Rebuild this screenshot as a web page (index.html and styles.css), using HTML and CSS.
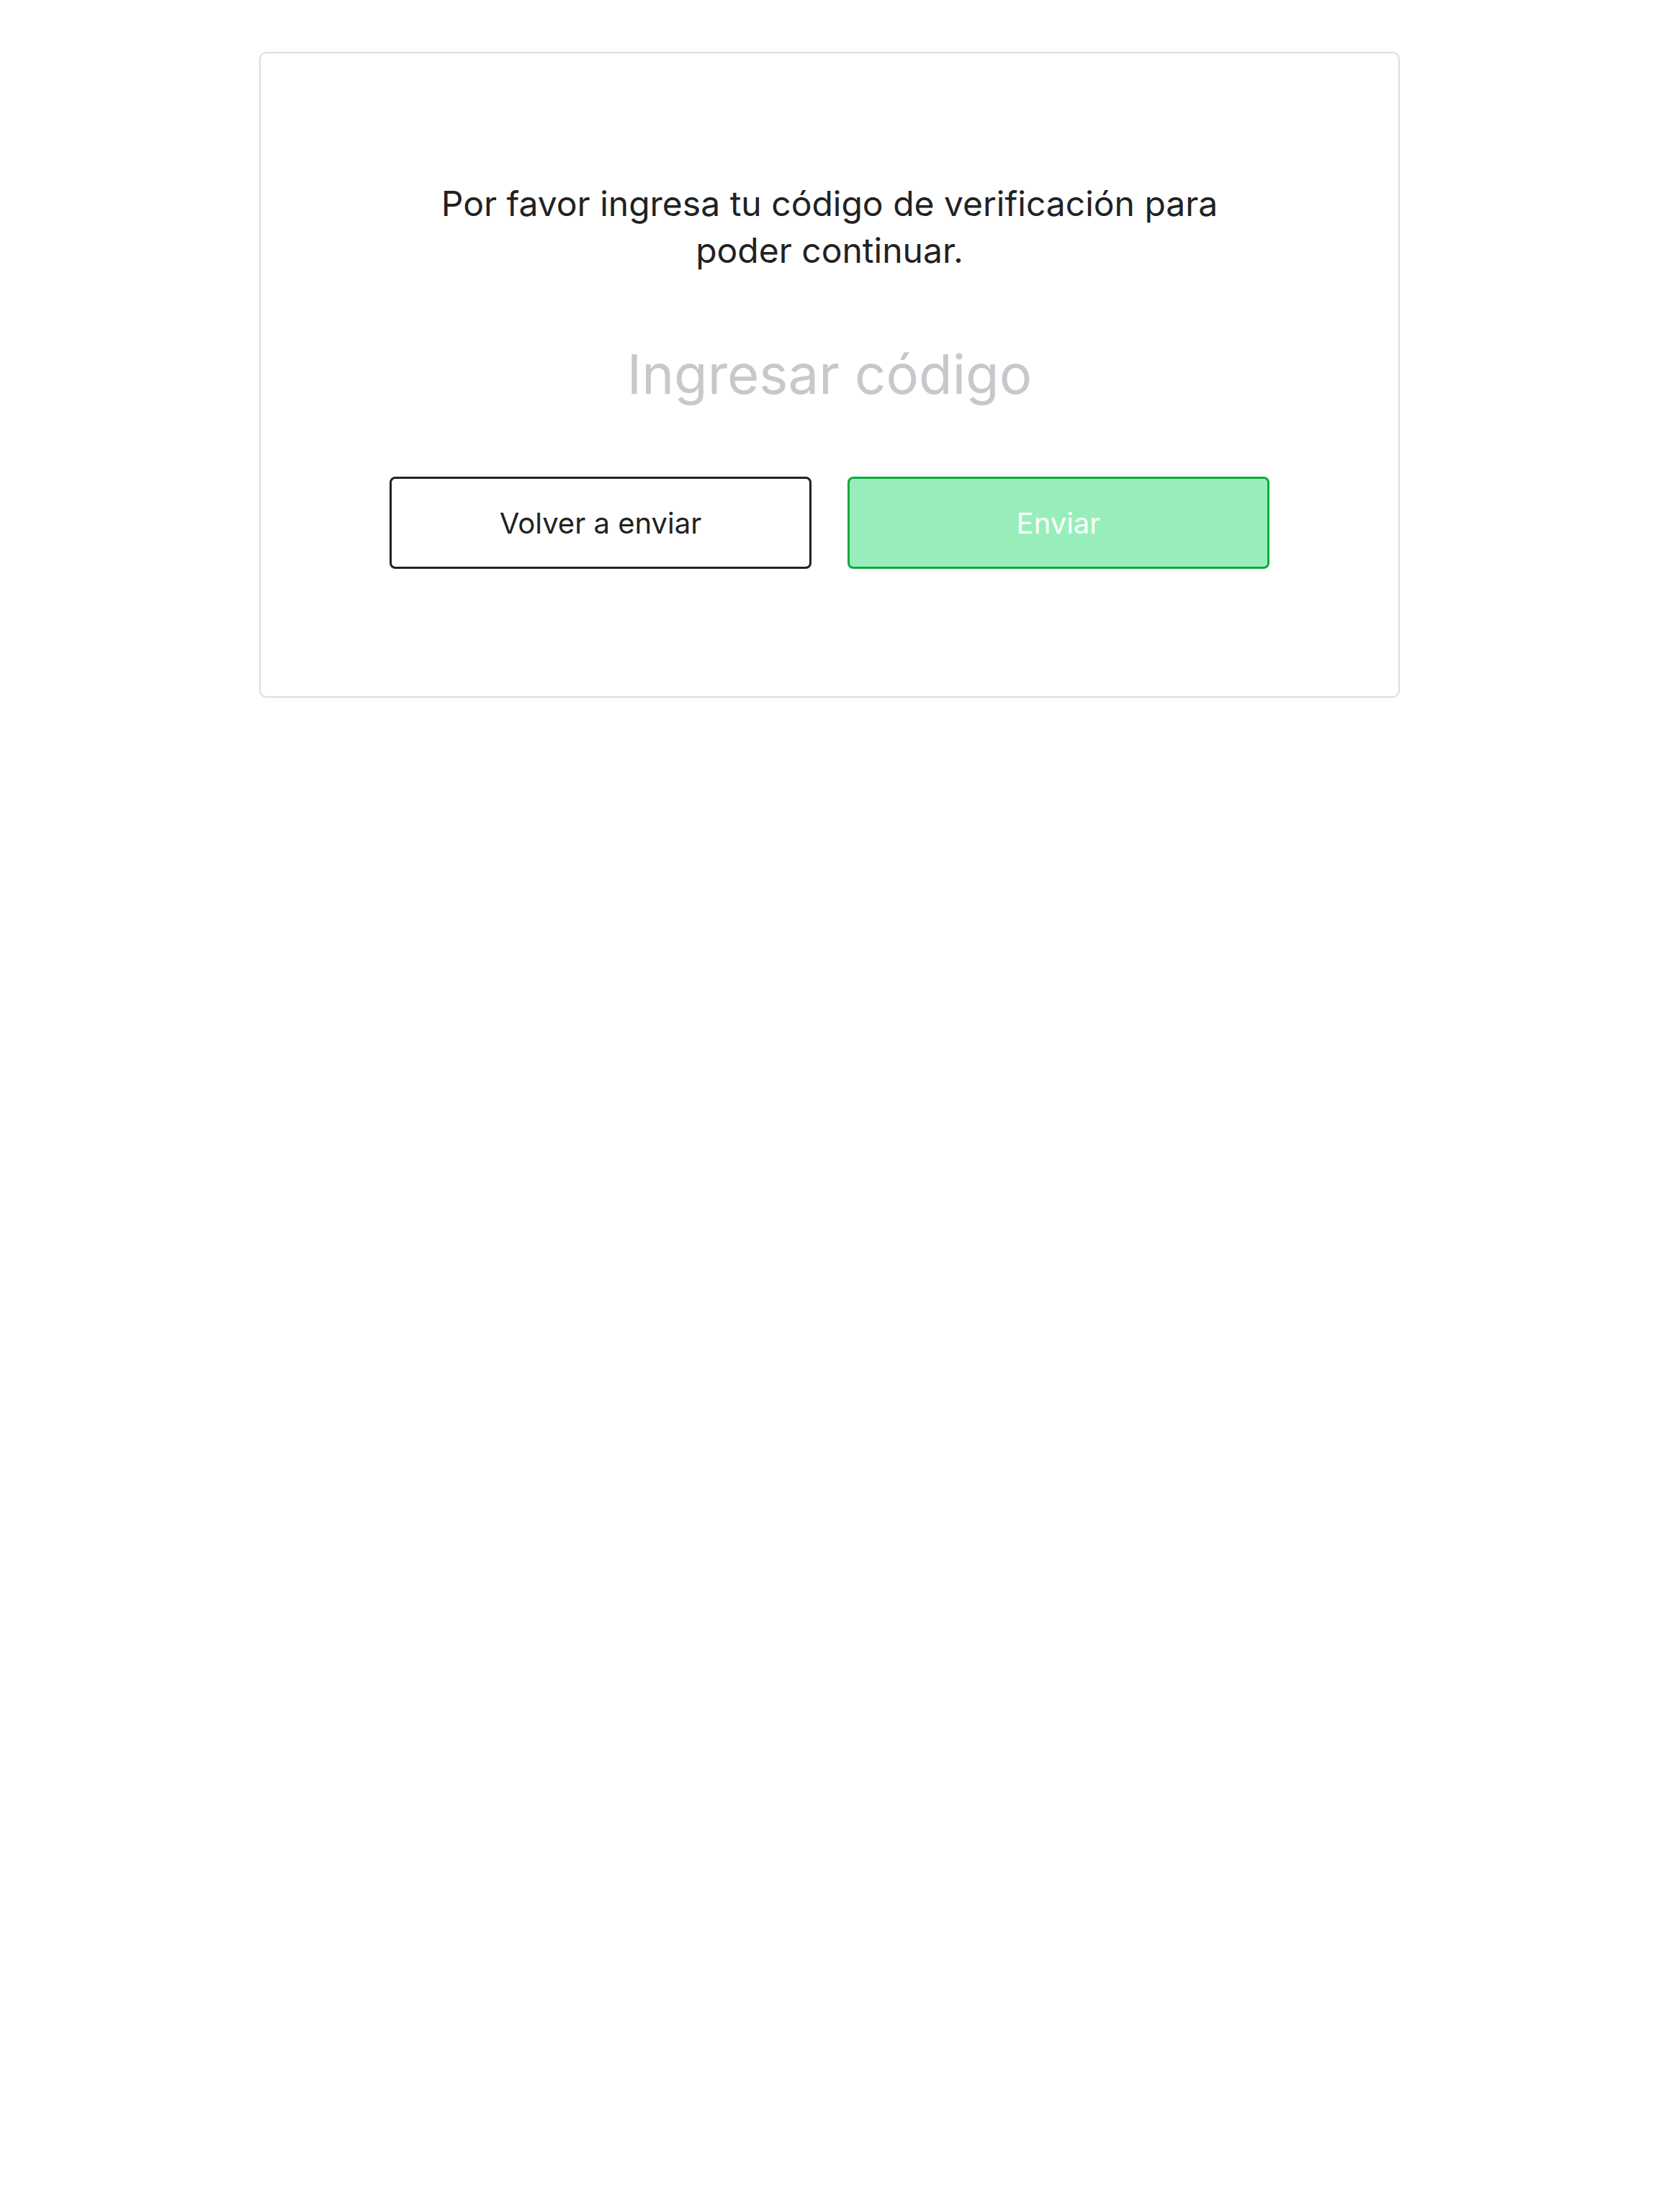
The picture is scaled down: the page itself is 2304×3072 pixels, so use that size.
FILE: index.html
```html
<!DOCTYPE html>
<html lang="es">
<head>
<meta charset="utf-8">
<title>Verificación</title>
<link rel="stylesheet" href="styles.css">
</head>
<body>
<main class="card">
  <p class="message">Por favor ingresa tu código de verificación para poder continuar.</p>
  <input class="code-input" type="text" placeholder="Ingresar código">
  <div class="actions">
    <button class="btn btn-outline" type="button">Volver a enviar</button>
    <button class="btn btn-primary" type="button">Enviar</button>
  </div>
</main>
</body>
</html>
```

FILE: styles.css
```css
html, body {
  margin: 0;
  padding: 0;
  background: #ffffff;
}

body {
  font-family: Inter, "Noto Sans", "Liberation Sans", sans-serif;
  color: #222222;
}

.card {
  box-sizing: border-box;
  width: 1584px;
  margin: 72px auto 0;
  border: 2px solid #dddddd;
  border-radius: 10px;
  padding: 176px 179px 177px;
  display: flex;
  flex-direction: column;
  align-items: center;
}

.message {
  margin: 0;
  max-width: 1120px;
  font-size: 48px;
  line-height: 65px;
  text-align: center;
  color: #222222;
}

.code-input {
  margin-top: 91px;
  width: 100%;
  border: none;
  outline: none;
  background: transparent;
  padding: 0;
  font-family: inherit;
  font-size: 76px;
  font-weight: 400;
  line-height: 97px;
  height: 97px;
  text-align: center;
  color: #222222;
}

.code-input::placeholder {
  color: #c7c7cc;
  opacity: 1;
}

.actions {
  margin-top: 94px;
  width: 100%;
  display: grid;
  grid-template-columns: 1fr 1fr;
  column-gap: 50px;
}

.btn {
  box-sizing: border-box;
  height: 128px;
  border-radius: 8px;
  font-family: inherit;
  font-size: 40px;
  cursor: pointer;
}

.btn-outline {
  background: #ffffff;
  border: 3px solid #222222;
  color: #222222;
}

.btn-primary {
  background: #98eebb;
  border: 3px solid #0aab3c;
  color: #ffffff;
}
```
